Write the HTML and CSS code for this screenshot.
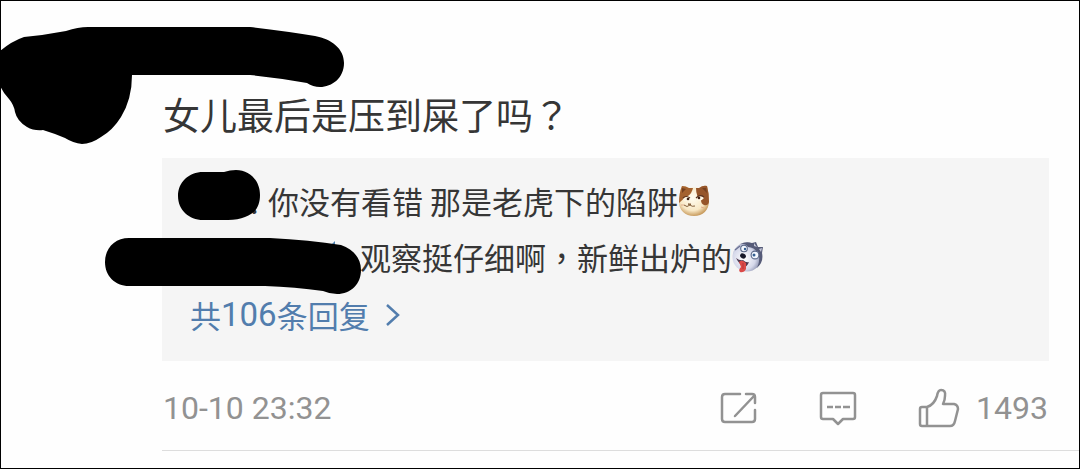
FILE: index.html
```html
<!DOCTYPE html>
<html lang="zh-CN">
<head>
<meta charset="utf-8">
<title>评论</title>
<link rel="stylesheet" href="styles.css">
</head>
<body>
<article class="comment">
  <svg class="mask mask-author" width="346" height="146" viewBox="0 0 346 146" aria-hidden="true">
    <path d="M0 51Q12 41 24 37Q45 35 66 31Q78 27 88 27H250Q285 31 315 36C332 39 344 49 344 63C344 78 332 87 320 87Q313 87 307 83Q280 78 250 75H132Q132 99 121 117Q113 130 101 137Q91 144 82 144Q73 143 65 138Q53 133 43 130Q34 131 27 127Q17 121 15 112Q14 105 9 99Q4 94 0 86Z"/>
  </svg>
  <div class="body">
    <p class="text">女儿最后是压到屎了吗<span class="mark" lang="zh-TW">？</span></p>
    <section class="replies">
      <p class="reply reply-first">
        <svg class="mask mask-first" width="84" height="52" viewBox="0 0 84 52" aria-hidden="true">
          <path d="M25 3H46Q52 1 58 1C72 1 82 12 82 26C82 37 77 45 67 48Q60 51 50 51H25C11 51 0 41 0 27C0 13 11 3 25 3Z"/>
        </svg>
        <span class="colon">:</span>
        <span>你没有看错 那是老虎下的陷阱</span>
        <svg class="emoji" viewBox="0 0 32 32" role="img" aria-label="猫">
          <defs>
            <radialGradient id="cream" cx="45%" cy="40%" r="60%">
              <stop offset="0" stop-color="#fffdf2"/><stop offset=".7" stop-color="#f8e8c5"/><stop offset="1" stop-color="#c99d60"/>
            </radialGradient>
          </defs>
          <path d="M4 1Q8 1 11 3Q16 2 21 3Q25 0 29 1Q31 8 31 16C31 25 25 31 16 31C7 31 1 25 1 17Q1 8 4 1Z" fill="url(#cream)"/>
          <path d="M4 1Q8 1 11 3L15 3Q14 8 10 11Q6 13 1 18Q1 8 4 1Z" fill="#a4622f"/>
          <path d="M18 3L21 3Q25 0 29 1Q31 8 31 17Q30 21 26 20Q23 19 23 15Q18 12 18 3Z" fill="#96552a"/>
          <path d="M4 3L8 4L4 8ZM24 3L28 3L29 8Z" fill="#74401f"/>
          <path d="M5 14Q8 10 12 13Q10 17 6 16ZM18 13Q22 9 26 13Q23 17 19 15Z" fill="#fff7e5"/>
          <path d="M5 13Q8 10 12 13M18 13Q22 9 26 12" fill="none" stroke="#5c3520" stroke-width="1.2"/>
          <circle cx="10" cy="14" r="1.3" fill="#3e2116"/><circle cx="21" cy="13" r="1.3" fill="#3e2116"/>
          <path d="M10 19H13L12 20ZM12 20Q9 23 6 20M12 20Q14 22 17 21" fill="none" stroke="#86613c" stroke-width="1"/>
          <path d="M3 20H6M23 22L26 23" stroke="#e1ad8b" stroke-width="1"/>
        </svg>
      </p>
      <p class="reply reply-second">
        <svg class="mask mask-second" width="258" height="58" viewBox="0 0 258 58" aria-hidden="true">
          <path class="name-edge" d="M227 7L230 4V9Z"/>
          <path d="M24 1H165Q205 3 236 8C248 12 256 21 256 33C256 47 246 57 232 57Q225 57 218 54Q190 50 160 49H24C10 49 0 39 0 25C0 11 10 1 24 1Z"/>
        </svg>
        <span>观察挺仔细啊<span class="mark" lang="zh-TW">，</span>新鲜出炉的</span>
        <svg class="emoji" viewBox="0 0 32 32" role="img" aria-label="哈士奇">
          <defs>
            <radialGradient id="fur" cx="40%" cy="55%" r="60%">
              <stop offset="0" stop-color="#fff"/><stop offset=".65" stop-color="#d5d8ea"/><stop offset="1" stop-color="#8187a6"/>
            </radialGradient>
          </defs>
          <circle cx="15" cy="16" r="14.5" fill="url(#fur)"/>
          <path d="M8 3Q14 0 20 2L24 1L26 6L31 6L30 12Q32 21 25 27Q29 18 26 12Q22 6 16 6Q13 2 8 3Z" fill="#565b78"/>
          <path d="M22 2L25 6L22 5ZM27 8L30 7L29 11Z" fill="#c2c5d6"/>
          <path d="M3 9L8 5" stroke="#6a7090" stroke-width="1.3"/>
          <circle cx="12" cy="7.5" r="3.3" fill="#f4f8ff" stroke="#5a6888" stroke-width="1.1"/>
          <circle cx="23" cy="14" r="3.9" fill="#f4f8ff" stroke="#5a6888" stroke-width="1.1"/>
          <circle cx="13" cy="8" r="1.2" fill="#345f91"/><circle cx="22" cy="14" r="1.5" fill="#345f91"/>
          <ellipse cx="11" cy="15" rx="3" ry="2.4" transform="rotate(25 11 15)" fill="#16182a"/>
          <path d="M4 17Q8 20 11 19Q14 22 17 21Q15 26 12 26Q7 23 4 17Z" fill="#4c3950"/>
          <path d="M7 21Q10 18 14 22L14 28Q12 32 8 31Q6 29 9 26Z" fill="#db4a48"/>
          <path d="M11 22L11 28" stroke="#b5343a"/>
        </svg>
      </p>
      <a class="more" href="#replies">共<span class="count">106</span>条回复<svg class="chevron" width="16" height="24" viewBox="0 0 16 24" aria-hidden="true"><path d="M2 2L13 12L2 22"/></svg></a>
    </section>
    <footer class="meta">
      <time class="time" datetime="10-10T23:32">10-10 23:32</time>
      <div class="actions">
        <button class="action" type="button" aria-label="转发">
          <svg width="38" height="32" viewBox="0 0 38 32" aria-hidden="true">
            <path d="M20 2H5Q2 2 2 5V27Q2 30 5 30H32Q35 30 35 27V18M15 24L34 4M26 2H32Q35 2 35 5V11"/>
          </svg>
        </button>
        <button class="action" type="button" aria-label="评论">
          <svg width="38" height="36" viewBox="0 0 38 36" aria-hidden="true">
            <path d="M4 3H34Q36 3 36 5V27Q36 29 34 29H24L19 34L14 29H4Q2 29 2 27V5Q2 3 4 3Z"/><path class="dots" d="M8 17H14M16 17H22M24 17H31"/>
          </svg>
        </button>
        <button class="action like" type="button" aria-label="赞 1493">
          <svg width="42" height="40" viewBox="0 0 42 40" aria-hidden="true">
            <path d="M4 19H9Q16 17 19 8Q20 2 23 2Q28 2 27 8Q27 12 25 16H36Q40 17 40 21L37 33Q36 38 32 38H4Q2 38 2 36V21Q2 19 4 19ZM9 19V38"/>
          </svg>
          <span>1493</span>
        </button>
      </div>
    </footer>
  </div>
</article>
</body>
</html>
```
FILE: styles.css
```css
* {
  box-sizing: border-box;
}

body {
  margin: 0;
  background: #fefefe;
  color: #363636;
  font-family: Roboto, "Noto Sans CJK SC", sans-serif;
}

p {
  margin: 0;
}

.comment {
  position: relative;
  min-height: 100vh;
  padding: 85px 0 17px 161px;
  border: 1px solid #000;
}

.body {
  border-bottom: 1px solid #ddd;
}

.mask {
  position: absolute;
  fill: #000;
}

.name-edge {
  fill: #4a7fae;
}

.mask-author {
  top: -1px;
  left: -1px;
}

.text {
  padding-left: 1px;
  font-family: "Noto Sans CJK SC", sans-serif;
  font-size: 37px;
  line-height: 56px;
}

.mark {
  font-family: "Noto Sans CJK TC", sans-serif;
}

.replies {
  margin: 16px 30px 0 0;
  padding: 15px 28px 17px;
  background: #f5f5f5;
}

.reply {
  position: relative;
  display: flex;
  align-items: center;
  font-family: "Noto Sans CJK SC", sans-serif;
  font-size: 31px;
  line-height: 56px;
}

.reply-first {
  padding-left: 60px;
}

.colon {
  width: 18px;
}

.reply-second {
  padding-left: 170px;
}

.mask-first {
  top: -4px;
  left: -12px;
}

.mask-second {
  top: 8px;
  left: -85px;
}

.emoji {
  flex: none;
  width: 32px;
  height: 32px;
}

.more {
  display: flex;
  align-items: center;
  color: #527dad;
  font-family: "Noto Sans CJK SC", sans-serif;
  font-size: 31px;
  line-height: 59px;
  text-decoration: none;
}

.count {
  font-family: Roboto, sans-serif;
  font-size: 33px;
}

.chevron {
  margin-left: 15px;
  fill: none;
  stroke: #527dad;
  stroke-width: 2.5;
}

.meta {
  display: flex;
  align-items: center;
  justify-content: space-between;
  height: 89px;
  padding: 4px 31px 0 1px;
  color: #929292;
  font-size: 32px;
}

.actions {
  display: flex;
  align-items: center;
  gap: 61px;
}

.action {
  display: flex;
  align-items: center;
  gap: 16px;
  padding: 0;
  border: 0;
  background: none;
  color: inherit;
  font: inherit;
}

.action svg {
  fill: none;
  stroke: #929292;
  stroke-width: 2.5;
  stroke-linecap: round;
  stroke-linejoin: round;
}

.action .dots {
  stroke-linecap: butt;
}
```
